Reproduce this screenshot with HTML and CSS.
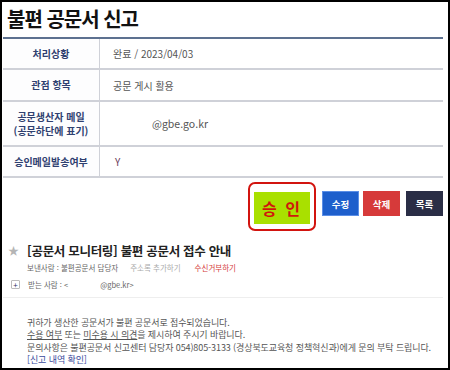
FILE: index.html
```html
<!DOCTYPE html>
<html lang="ko">
<head>
<meta charset="utf-8">
<link rel="stylesheet" href="styles.css">
</head>
<body>
<div class="frame">
  <h1 class="title">불편 공문서 신고</h1>
  <div class="table">
    <div class="row r1"><div class="th">처리상황</div><div class="td">완료 / 2023/04/03</div></div>
    <div class="row r2"><div class="th">관점 항목</div><div class="td">공문 게시 활용</div></div>
    <div class="row r3"><div class="th">공문생산자 메일<br>(공문하단에 표기)</div><div class="td email">@gbe.go.kr</div></div>
    <div class="row r4"><div class="th">승인메일발송여부</div><div class="td yes">Y</div></div>
  </div>
  <div class="actions">
    <div class="approve-ring"><button class="btn approve">승 인</button></div>
    <button class="btn small edit">수정</button>
    <button class="btn small del">삭제</button>
    <button class="btn small list">목록</button>
  </div>
  <div class="mail">
    <div class="mail-title"><span class="star">★</span>[공문서 모니터링] 불편 공문서 접수 안내</div>
    <div class="mail-from"><span>보낸사람 : 불편공문서 담당자</span><span class="addr">주소록 추가하기</span><span class="reject">수신거부하기</span></div>
    <div class="mail-to"><span class="plus">+</span><span>받는 사람 : &lt;</span><span class="to-addr">@gbe.kr&gt;</span></div>
    <div class="mail-body">
      <p>귀하가 생산한 공문서가 불편 공문서로 접수되었습니다.</p>
      <p><u>수용 여부</u> 또는 <u>미수용 시 의견</u>을 제시하여 주시기 바랍니다.</p>
      <p>문의사항은 불편공문서 신고센터 담당자 054)805-3133 (경상북도교육청 정책혁신과)에게 문의 부탁 드립니다.</p>
      <p class="link">[신고 내역 확인]</p>
    </div>
  </div>
</div>
</body>
</html>
```
FILE: styles.css
```css
* { box-sizing: border-box; }
html, body { margin: 0; padding: 0; background: #fff; }
body { font-family: "Noto Sans CJK KR", "Noto Sans", sans-serif; }
.frame {
  width: 450px; height: 370px;
  border: 2px solid #000;
  overflow: hidden;
  padding: 0 5px 0 1px;
}
.title {
  margin: 0; padding: 1px 0 0 4px;
  font-size: 20px; font-weight: 700; line-height: 32px; height: 35px;
  color: #111; letter-spacing: -1px;
}
.table {
  width: 440px;
  border-top: 2px solid #5d7190;
}
.row {
  display: flex;
  border-bottom: 2px solid #cfd1d8;
}
.r1 { height: 31px; }
.r2 { height: 32px; }
.r3 { height: 45px; }
.r4 { height: 31px; }
.th {
  width: 97px; flex: none;
  border-right: 1px solid #cfd1d8;
  display: flex; align-items: center; justify-content: center;
  text-align: center;
  font-size: 10px; font-weight: 700; color: #2f4070;
  line-height: 14px;
  background: #fdfdfe;
}
.td {
  flex: 1;
  display: flex; align-items: center;
  padding-left: 13px;
  font-size: 10px; color: #555;
}
.td.email { padding-left: 52px; font-size: 10.5px; }
.td.yes { padding-left: 15px; color: #6a3a5a; }
.actions {
  display: flex; justify-content: flex-end; align-items: flex-start;
  width: 440px; margin-top: 4px; gap: 4px;
  height: 53px;
}
.approve-ring {
  border: 2px solid #d2140f; border-radius: 7px;
  padding: 8px 4px 5px 4px;
  margin-right: 2px;
}
.btn {
  border: none; font-family: inherit; font-weight: 700; color: #fff; padding: 0;
}
.approve {
  width: 56px; height: 32px; background: #a9e000; color: #d0160c;
  font-size: 16px; letter-spacing: 2px; display: block;
}
.small { width: 37px; height: 25px; font-size: 9.5px; margin-top: 9px; }
.edit { background: #1e5fcc; border: 1px solid #5b8ee6; }
.del { background: #d63a3a; margin-left: 0; }
.list { background: #2a2e46; margin-left: 2px; }
.mail { padding-top: 6px; }
.mail-title {
  display: flex; align-items: center;
  font-size: 12.5px; font-weight: 700; color: #222; height: 18px;
  padding-left: 5px; letter-spacing: -0.3px;
}
.star { color: #b5b5b5; font-size: 11px; width: 19px; }
.mail-from {
  margin-top: 1px; padding-left: 24px; font-size: 7.5px; color: #666;
  display: flex; gap: 12px; height: 14px; align-items: center;
}
.addr { color: #aaa; }
.reject { color: #d43a3a; margin-left: 2px; }
.mail-to {
  margin-top: 3px; padding-left: 8px; font-size: 7.5px; color: #666;
  display: flex; align-items: center;
  border-bottom: 1px solid #eee; padding-bottom: 6px; height: 21px; width: 440px;
}
.plus {
  width: 9px; height: 9px; border: 1px solid #bbb; font-size: 8px; line-height: 7px;
  text-align: center; color: #336; margin-right: 8px; border-radius: 1px;
}
.to-addr { margin-left: 32px; }
.mail-body {
  padding: 19px 0 0 24px; font-size: 9px; color: #555; line-height: 12.4px;
}
.mail-body p { margin: 0; white-space: nowrap; letter-spacing: -0.1px; }
.link { color: #3a4b9c; }
```
